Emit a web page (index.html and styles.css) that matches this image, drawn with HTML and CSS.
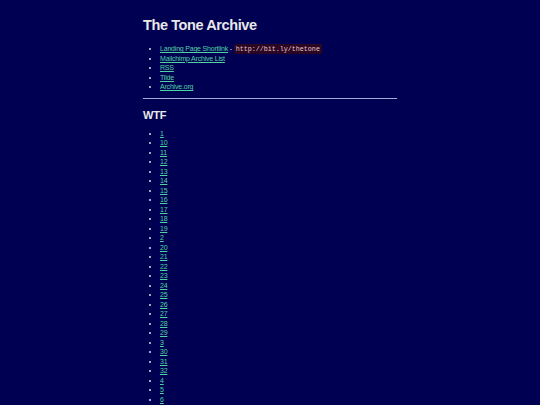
FILE: index.html
```html
<!DOCTYPE html>
<html>
<head>
<meta charset="utf-8">
<title>The Tone Archive</title>
<link rel="stylesheet" href="styles.css">
</head>
<body>
<main class="page">
  <h1 class="title">The Tone Archive</h1>
  <ul class="list">
    <li><a href="#">Landing Page Shortlink</a> - <code class="code">http://bit.ly/thetone</code></li>
    <li><a href="#">Mailchimp Archive List</a></li>
    <li><a href="#">RSS</a></li>
    <li><a href="#">Tilde</a></li>
    <li><a href="#">Archive.org</a></li>
  </ul>
  <hr class="rule">
  <h2 class="section">WTF</h2>
  <ul class="list">
    <li><a href="#">1</a></li>
    <li><a href="#">10</a></li>
    <li><a href="#">11</a></li>
    <li><a href="#">12</a></li>
    <li><a href="#">13</a></li>
    <li><a href="#">14</a></li>
    <li><a href="#">15</a></li>
    <li><a href="#">16</a></li>
    <li><a href="#">17</a></li>
    <li><a href="#">18</a></li>
    <li><a href="#">19</a></li>
    <li><a href="#">2</a></li>
    <li><a href="#">20</a></li>
    <li><a href="#">21</a></li>
    <li><a href="#">22</a></li>
    <li><a href="#">23</a></li>
    <li><a href="#">24</a></li>
    <li><a href="#">25</a></li>
    <li><a href="#">26</a></li>
    <li><a href="#">27</a></li>
    <li><a href="#">28</a></li>
    <li><a href="#">29</a></li>
    <li><a href="#">3</a></li>
    <li><a href="#">30</a></li>
    <li><a href="#">31</a></li>
    <li><a href="#">32</a></li>
    <li><a href="#">4</a></li>
    <li><a href="#">5</a></li>
    <li><a href="#">6</a></li>
    <li><a href="#">7</a></li>
    <li><a href="#">8</a></li>
    <li><a href="#">9</a></li>
  </ul>
</main>
</body>
</html>
```
FILE: styles.css
```css
html, body {
  margin: 0;
  padding: 0;
  background: #000052;
}
body {
  font-family: "Liberation Sans", Arial, sans-serif;
  color: #dcdcdc;
}
.page {
  width: 254px;
  margin: 0 auto;
  padding-top: 16px;
}
.title {
  font-size: 14.5px;
  line-height: 18px;
  letter-spacing: -0.4px;
  margin: 0 0 10px 0;
  font-weight: bold;
  color: #e8e8e8;
}
.list {
  margin: 0;
  padding-left: 17px;
  font-size: 7px;
  line-height: 9.5px;
  letter-spacing: -0.2px;
}
.list a {
  color: #4fd3a4;
  text-decoration: underline;
}
.code {
  font-family: "Liberation Mono", "Courier New", monospace;
  font-size: 6.7px;
  line-height: 1;
  letter-spacing: 0;
  background: #2a0524;
  color: #e6c8c8;
  padding: 1px 2px;
}
.rule {
  border: 0;
  border-top: 1px solid #a8a8d8;
  margin: 6px 0 0 0;
}
.section {
  font-size: 11px;
  line-height: 14px;
  letter-spacing: -0.2px;
  margin: 9px 0 7px 0;
  font-weight: bold;
  color: #e8e8e8;
}
```
